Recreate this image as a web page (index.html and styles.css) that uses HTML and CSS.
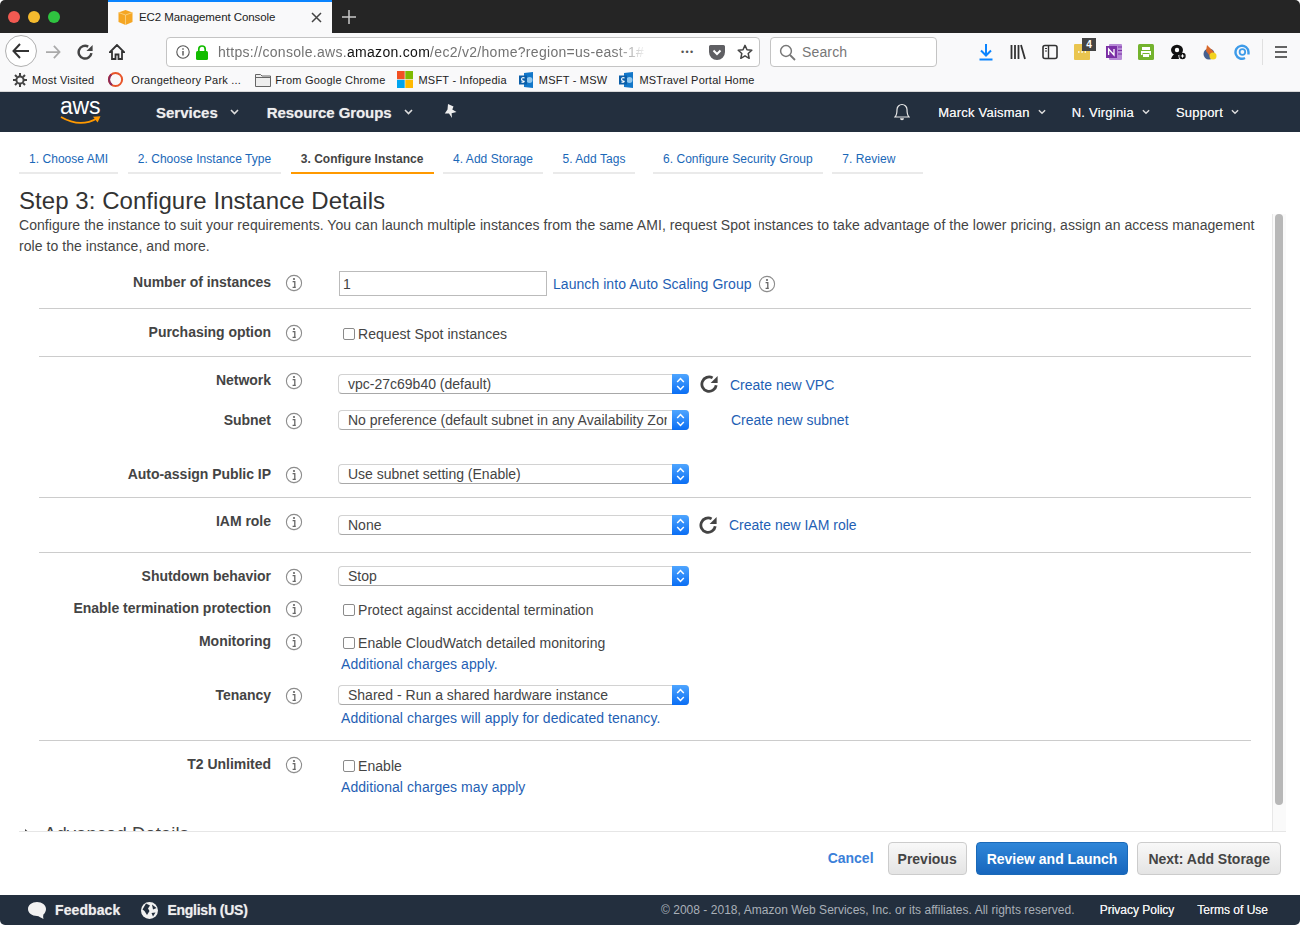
FILE: index.html
```html
<!DOCTYPE html>
<html lang="en">
  <head>
    <meta charset="UTF-8" />
    <meta name="viewport" content="width=device-width, initial-scale=1.0" />
    <title>EC2 Management Console</title>
    <link rel="stylesheet" href="styles.css">
  </head>
  <body>
    <!-- Shared icons -->
    <svg class="icon-defs" width="0" height="0">
      <symbol id="i-info" viewBox="0 0 18 18">
        <circle cx="9" cy="9.6" r="8" fill="#e4e4e4" />
        <circle cx="9" cy="9" r="7.6" fill="#fff" stroke="#8c8c8c" stroke-width="1.1" />
        <circle cx="9" cy="5" r="1.1" fill="#666" />
        <path d="M7.6 7.6H9.8V13M7.6 13.4H10.8" fill="none" stroke="#666" stroke-width="1.3" />
      </symbol>
      <symbol id="i-refresh" viewBox="0 0 18 18">
        <path d="M16.2 10.2A7.2 7.2 0 1 1 12.6 2.9" fill="none" stroke="#444" stroke-width="2.8" />
        <path d="M17.6 1V8H10.6Z" fill="#444" />
      </symbol>
      <symbol id="i-chev" viewBox="0 0 9 6">
        <path d="M1 1L4.5 4.5L8 1" fill="none" stroke="#ddd" stroke-width="1.6" />
      </symbol>
      <symbol id="i-step" viewBox="0 0 17 20">
        <path d="M5.2 8L8.5 4.6L11.8 8M5.2 12L8.5 15.4L11.8 12" fill="none" stroke="#fff" stroke-width="1.5" />
      </symbol>
      <symbol id="i-sp" viewBox="0 0 14 16">
        <path d="M5 1L14 0V16L5 15Z" fill="#1277c9" />
        <circle cx="10.5" cy="8" r="3" fill="#8fc6ee" />
        <rect x="0" y="3.5" width="8" height="9" fill="#0b5ea8" />
        <path d="M5.6 6Q3 5 2.6 6.8T5.2 9.4Q5 10.8 2.4 10" fill="none" stroke="#fff" stroke-width="1.1" />
      </symbol>
    </svg>

    <!-- Browser window -->
    <div class="tab-strip">
      <div class="lights">
        <span class="light light-red"></span>
        <span class="light light-yellow"></span>
        <span class="light light-green"></span>
      </div>
      <div class="browser-tab">
        <svg width="15" height="15" viewBox="0 0 15 15">
          <path d="M7.5 0L14.5 2.5V12L7.5 15L.5 12V2.5Z" fill="#f5a623" />
          <path d="M.5 2.5L7.5 5L14.5 2.5M7.5 5V15" fill="none" stroke="#fbd58c" stroke-width=".8" />
        </svg>
        <span class="browser-tab-title">EC2 Management Console</span>
        <svg class="browser-tab-close" width="11" height="11" viewBox="0 0 11 11">
          <path d="M1 1L10 10M10 1L1 10" stroke="#444" stroke-width="1.5" />
        </svg>
      </div>
      <svg class="new-tab" width="14" height="14" viewBox="0 0 14 14">
        <path d="M7 0V14M0 7H14" stroke="#c8c8c8" stroke-width="1.5" />
      </svg>
    </div>

    <div class="toolbar">
      <div class="back-btn">
        <svg width="18" height="16" viewBox="0 0 18 16">
          <path d="M8 1L1.5 8L8 15M1.5 8H17" fill="none" stroke="#333" stroke-width="2" />
        </svg>
      </div>
      <svg class="tool-forward" width="16" height="14" viewBox="0 0 18 16">
        <path d="M10 1L16.5 8L10 15M16.5 8H1" fill="none" stroke="#aaa" stroke-width="2" />
      </svg>
      <svg class="tool-reload" width="16" height="16" viewBox="0 0 18 18">
        <use href="#i-refresh" />
      </svg>
      <svg class="tool-home" width="16" height="16" viewBox="0 0 16 16">
        <path d="M8 1L1 8H3V15H6.5V10.5H9.5V15H13V8H15Z" fill="none" stroke="#333" stroke-width="1.8" />
      </svg>

      <div class="url-bar">
        <svg width="14" height="14" viewBox="0 0 14 14">
          <circle cx="7" cy="7" r="6.2" fill="none" stroke="#555" stroke-width="1.1" />
          <path d="M7 6V10.6M7 3.2V4.8" stroke="#555" stroke-width="1.4" />
        </svg>
        <svg class="url-lock" width="12" height="15" viewBox="0 0 12 15">
          <rect x="0" y="6" width="12" height="9" rx="1.5" fill="#12bc00" />
          <path d="M2.8 6.5V4.2A3.2 3.2 0 0 1 9.2 4.2V6.5" fill="none" stroke="#12bc00" stroke-width="1.7" />
        </svg>
        <div class="url-text">https://console.aws.<b>amazon.com</b>/ec2/v2/home?region=us-east-1#</div>
        <span class="url-dots">•••</span>
        <svg width="16" height="15" viewBox="0 0 16 15">
          <path d="M1.5 0H14.5A1.5 1.5 0 0 1 16 1.5V7A8 8 0 0 1 0 7V1.5A1.5 1.5 0 0 1 1.5 0Z" fill="#5f5f63" />
          <path d="M4.5 5.5L8 9L11.5 5.5" fill="none" stroke="#fff" stroke-width="2" />
        </svg>
        <svg class="url-star" width="16" height="16" viewBox="0 0 16 16">
          <path d="M8 1.4L10 5.8L14.8 6.3L11.2 9.5L12.2 14.3L8 11.8L3.8 14.3L4.8 9.5L1.2 6.3L6 5.8Z" fill="none" stroke="#444" stroke-width="1.5" stroke-linejoin="round" />
        </svg>
      </div>

      <div class="search-bar">
        <svg width="17" height="17" viewBox="0 0 17 17">
          <circle cx="7" cy="7" r="5.4" fill="none" stroke="#777" stroke-width="1.5" />
          <path d="M11 11L16 16" stroke="#777" stroke-width="1.8" />
        </svg>
        <span>Search</span>
      </div>

      <div class="tool-icons">
        <svg width="16" height="18" viewBox="0 0 16 18">
          <path d="M8 1V12M3 7.5L8 12.5L13 7.5" fill="none" stroke="#0a84ff" stroke-width="2" />
          <path d="M1.5 16.5H14.5" stroke="#0a84ff" stroke-width="2" />
        </svg>
        <svg width="16" height="16" viewBox="0 0 16 16">
          <path d="M1.5 1V15M5 1V15M8.5 1V15M11 1L15 15" stroke="#333" stroke-width="1.8" />
        </svg>
        <svg width="16" height="16" viewBox="0 0 16 16">
          <rect x="1" y="1.5" width="14" height="13" rx="2" fill="none" stroke="#333" stroke-width="1.6" />
          <path d="M6.5 2V14" stroke="#333" stroke-width="1.4" />
          <path d="M3 4.5H5M3 7H5" stroke="#333" />
        </svg>
        <div class="ext-notes">
          <svg width="16" height="16" viewBox="0 0 16 16">
            <rect width="16" height="16" rx="1" fill="#eac54f" />
            <path d="M4 8H5.500M7.300 8H8.800M10.600 8H12" stroke="#fff" stroke-width="1.6" />
          </svg>
          <span class="ext-badge">4</span>
        </div>
        <svg width="16" height="16" viewBox="0 0 16 16">
          <rect x="3" y="0" width="13" height="16" rx="1" fill="#b78ad6" />
          <path d="M12 3H16M12 6.500H16M12 10H16" stroke="#7b2fa5" />
          <rect x="0" y="2" width="11" height="12" fill="#7b2fa5" />
          <path d="M2.6 11V5L8 11V5" fill="none" stroke="#fff" stroke-width="1.3" />
        </svg>
        <svg width="16" height="16" viewBox="0 0 16 16">
          <rect width="16" height="16" rx="1.5" fill="#74b32d" />
          <rect x="4" y="3" width="8" height="3" fill="#fff" />
          <path d="M3 7H13V11H11.5V9H4.5V11H3Z" fill="#fff" />
          <rect x="5" y="10" width="6" height="3" fill="#fff" />
        </svg>
        <svg width="16" height="16" viewBox="0 0 16 16">
          <ellipse cx="7" cy="6" rx="6" ry="5.2" fill="#111" />
          <circle cx="7" cy="6" r="2.2" fill="#fff" />
          <path d="M1 15Q3 9 8 10L9 15Z" fill="#111" />
          <circle cx="12.5" cy="12" r="3.2" fill="#111" />
          <path d="M12.5 10.3V13.7M10.8 12H14.2" stroke="#fff" />
        </svg>
        <svg width="16" height="16" viewBox="0 0 16 16">
          <circle cx="7" cy="10" r="5.5" fill="#46608f" />
          <path d="M5 1L12 8L8 12L4 7Z" fill="#d9682a" />
          <circle cx="11" cy="12" r="3.5" fill="#f3d21f" />
        </svg>
        <svg width="16" height="16" viewBox="0 0 16 16">
          <path d="M11 14A6.500 6.500 0 1 1 14.500 8V10.500" fill="none" stroke="#3d9be9" stroke-width="2.4" />
          <circle cx="8.400" cy="8" r="2.800" fill="none" stroke="#3d9be9" stroke-width="1.800" />
        </svg>
      </div>
      <div class="tool-sep"></div>
      <svg class="tool-menu" width="12" height="12" viewBox="0 0 12 12">
        <path d="M0 1H12M0 6H12M0 11H12" stroke="#333" stroke-width="1.6" />
      </svg>
    </div>

    <div class="bookmarks">
      <div class="bookmark bookmark-first">
        <svg width="14" height="14" viewBox="0 0 14 14">
          <circle cx="7" cy="7" r="3.6" fill="none" stroke="#444" stroke-width="2" />
          <path d="M7 0V3M7 11V14M0 7H3M11 7H14M2 2L4 4M10 10L12 12M12 2L10 4M4 10L2 12" stroke="#444" stroke-width="2" />
        </svg>
        <span>Most Visited</span>
      </div>
      <div class="bookmark bookmark-otf">
        <svg width="17" height="17" viewBox="0 0 17 17">
          <circle cx="8.5" cy="8.5" r="6.6" fill="none" stroke="#e8552a" stroke-width="2" />
          <path d="M5 14A6.6 6.6 0 0 1 4.4 3.5" fill="none" stroke="#8c2b5a" stroke-width="2" />
        </svg>
        <span>Orangetheory Park ...</span>
      </div>
      <div class="bookmark bookmark-folder">
        <svg width="16" height="14" viewBox="0 0 16 14">
          <path d="M.5 1.5H5.5L7 3H15.5V13.5H.5Z" fill="#eee" stroke="#666" />
          <path d="M.5 4.5H15.5" stroke="#666" />
        </svg>
        <span>From Google Chrome</span>
      </div>
      <div class="bookmark bookmark-ms">
        <svg width="16" height="17" viewBox="0 0 16 17">
          <rect width="7.7" height="8.2" fill="#f25022" />
          <rect x="8.3" width="7.7" height="8.2" fill="#7fba00" />
          <rect y="8.8" width="7.7" height="8.2" fill="#00a4ef" />
          <rect x="8.3" y="8.8" width="7.7" height="8.2" fill="#ffb900" />
        </svg>
        <span>MSFT - Infopedia</span>
      </div>
      <div class="bookmark bookmark-sp">
        <svg width="14" height="16"><use href="#i-sp" /></svg>
        <span>MSFT - MSW</span>
      </div>
      <div class="bookmark bookmark-sp">
        <svg width="14" height="16"><use href="#i-sp" /></svg>
        <span>MSTravel Portal Home</span>
      </div>
    </div>

    <!-- Console header -->
    <nav class="navbar">
      <div class="aws-logo">
        <span class="aws-word">aws</span>
        <svg width="41" height="9" viewBox="0 0 41 9">
          <path d="M1 1Q20 12 37 2.5" fill="none" stroke="#f90" stroke-width="1.8" />
          <path d="M33 .8L40.5 .3L37.6 6.6Z" fill="#f90" />
        </svg>
      </div>
      <div class="nav-main nav-services">Services <svg width="9" height="6"><use href="#i-chev" /></svg></div>
      <div class="nav-main nav-groups">Resource Groups <svg width="9" height="6"><use href="#i-chev" /></svg></div>
      <svg class="nav-pin" width="13" height="14" viewBox="0 0 13 14">
        <path d="M4 0L9.5 2.5L8.3 5.5L12.5 8L7.6 9.2L8 14L5 9.5L.8 9.5L3.5 5.5Z" fill="#eee" />
      </svg>
      <svg class="nav-bell" width="16" height="18" viewBox="0 0 16 18">
        <path d="M8 1.5A5 5 0 0 0 3 6.5C3 11 2.6 12.4 1 14H15C13.4 12.4 13 11 13 6.5A5 5 0 0 0 8 1.5Z" fill="none" stroke="#e8e8e8" stroke-width="1.2" />
        <path d="M6 15.2A2 2 0 0 0 10 15.2Z" fill="#e8e8e8" />
      </svg>
      <div class="nav-right">Marck Vaisman <svg width="8" height="6"><use href="#i-chev" /></svg></div>
      <div class="nav-right">N. Virginia <svg width="8" height="6"><use href="#i-chev" /></svg></div>
      <div class="nav-right">Support <svg width="8" height="6"><use href="#i-chev" /></svg></div>
    </nav>

    <main class="wizard">
      <ul class="steps">
        <li class="step"><a href="#">1. Choose AMI</a></li>
        <li class="step"><a href="#">2. Choose Instance Type</a></li>
        <li class="step step-active"><a href="#">3. Configure Instance</a></li>
        <li class="step"><a href="#">4. Add Storage</a></li>
        <li class="step"><a href="#">5. Add Tags</a></li>
        <li class="step step-security"><a href="#">6. Configure Security Group</a></li>
        <li class="step step-review"><a href="#">7. Review</a></li>
      </ul>

      <h1 class="page-title">Step 3: Configure Instance Details</h1>

      <div class="panel">
        <div class="panel-body">
          <p class="intro">
            Configure the instance to suit your requirements. You can launch multiple instances from the same AMI, request Spot instances to take advantage of the lower pricing, assign an access management role to the instance, and more.
          </p>

          <!-- Number of instances -->
          <section class="form-section section-first">
            <div class="form-row">
              <label class="row-label">Number of instances</label>
              <svg class="info" width="18" height="18"><use href="#i-info" /></svg>
              <div class="row-field field-input">
                <input class="text-input" type="text" value="1" />
                <a class="link" href="#">Launch into Auto Scaling Group</a>
                <svg class="info info-inline" width="18" height="18"><use href="#i-info" /></svg>
              </div>
            </div>
          </section>

          <!-- Purchasing option -->
          <section class="form-section">
            <div class="form-row">
              <label class="row-label">Purchasing option</label>
              <svg class="info" width="18" height="18"><use href="#i-info" /></svg>
              <div class="row-field field-check">
                <label class="check"><input type="checkbox" />Request Spot instances</label>
              </div>
            </div>
          </section>

          <!-- Network -->
          <section class="form-section section-network">
            <div class="form-row row-subnet-gap">
              <label class="row-label">Network</label>
              <svg class="info" width="18" height="18"><use href="#i-info" /></svg>
              <div class="row-field field-low field-inline">
                <div class="select">
                  <span class="select-value">vpc-27c69b40 (default)</span>
                  <span class="select-arrows"><svg width="17" height="20"><use href="#i-step" /></svg></span>
                </div>
                <svg class="refresh" width="18" height="18"><use href="#i-refresh" /></svg>
                <a class="link link-create link-vpc" href="#">Create new VPC</a>
              </div>
            </div>
            <div class="form-row row-auto-gap">
              <label class="row-label">Subnet</label>
              <svg class="info" width="18" height="18"><use href="#i-info" /></svg>
              <div class="row-field field-inline">
                <div class="select">
                  <span class="select-value">No preference (default subnet in any Availability Zone)</span>
                  <span class="select-arrows"><svg width="17" height="20"><use href="#i-step" /></svg></span>
                </div>
                <a class="link link-create link-subnet" href="#">Create new subnet</a>
              </div>
            </div>
            <div class="form-row">
              <label class="row-label">Auto-assign Public IP</label>
              <svg class="info" width="18" height="18"><use href="#i-info" /></svg>
              <div class="row-field">
                <div class="select">
                  <span class="select-value">Use subnet setting (Enable)</span>
                  <span class="select-arrows"><svg width="17" height="20"><use href="#i-step" /></svg></span>
                </div>
              </div>
            </div>
          </section>

          <!-- IAM role -->
          <section class="form-section section-iam">
            <div class="form-row">
              <label class="row-label">IAM role</label>
              <svg class="info" width="18" height="18"><use href="#i-info" /></svg>
              <div class="row-field field-low field-inline">
                <div class="select">
                  <span class="select-value">None</span>
                  <span class="select-arrows"><svg width="17" height="20"><use href="#i-step" /></svg></span>
                </div>
                <svg class="refresh refresh-iam" width="18" height="18"><use href="#i-refresh" /></svg>
                <a class="link link-create link-iam" href="#">Create new IAM role</a>
              </div>
            </div>
          </section>

          <!-- Behaviour -->
          <section class="form-section section-behavior">
            <div class="form-row row-gap-12">
              <label class="row-label">Shutdown behavior</label>
              <svg class="info" width="18" height="18"><use href="#i-info" /></svg>
              <div class="row-field">
                <div class="select">
                  <span class="select-value">Stop</span>
                  <span class="select-arrows"><svg width="17" height="20"><use href="#i-step" /></svg></span>
                </div>
              </div>
            </div>
            <div class="form-row row-gap-11">
              <label class="row-label">Enable termination protection</label>
              <svg class="info" width="18" height="18"><use href="#i-info" /></svg>
              <div class="row-field field-check">
                <label class="check"><input type="checkbox" />Protect against accidental termination</label>
              </div>
            </div>
            <div class="form-row row-gap-11">
              <label class="row-label">Monitoring</label>
              <svg class="info" width="18" height="18"><use href="#i-info" /></svg>
              <div class="row-field field-check">
                <label class="check"><input type="checkbox" />Enable CloudWatch detailed monitoring</label>
                <a class="link link-note" href="#">Additional charges apply.</a>
              </div>
            </div>
            <div class="form-row">
              <label class="row-label">Tenancy</label>
              <svg class="info" width="18" height="18"><use href="#i-info" /></svg>
              <div class="row-field">
                <div class="select">
                  <span class="select-value">Shared - Run a shared hardware instance</span>
                  <span class="select-arrows"><svg width="17" height="20"><use href="#i-step" /></svg></span>
                </div>
                <a class="link link-note link-tenancy" href="#">Additional charges will apply for dedicated tenancy.</a>
              </div>
            </div>
          </section>

          <!-- T2 Unlimited -->
          <section class="form-section section-last">
            <div class="form-row">
              <label class="row-label">T2 Unlimited</label>
              <svg class="info" width="18" height="18"><use href="#i-info" /></svg>
              <div class="row-field field-check">
                <label class="check"><input type="checkbox" />Enable</label>
                <a class="link link-note" href="#">Additional charges may apply</a>
              </div>
            </div>
          </section>

          <div class="advanced">
            <span class="advanced-arrow"></span>
            <span>Advanced Details</span>
          </div>
        </div>
        <div class="scroll-track"><div class="scroll-thumb"></div></div>
      </div>

      <div class="actions">
        <a class="cancel" href="#">Cancel</a>
        <button class="btn btn-prev">Previous</button>
        <button class="btn btn-primary">Review and Launch</button>
        <button class="btn">Next: Add Storage</button>
      </div>
    </main>

    <footer class="site-footer">
      <svg class="foot-bubble" width="18" height="17" viewBox="0 0 18 17">
        <path d="M9 0C4 0 0 3 0 7C0 11 4 14 9 14C11 14 13 16 15.500 17C15 15.500 15 14 15.400 12.600C17 11.200 18 9.200 18 7C18 3 14 0 9 0Z" fill="#f2f2f2" />
      </svg>
      <span class="foot-main">Feedback</span>
      <svg class="foot-globe" width="17" height="17" viewBox="0 0 17 17">
        <circle cx="8.500" cy="8.500" r="8.500" fill="#f2f2f2" />
        <path d="M5 1.500L9 3.500L7 6.500L8.500 9L6 13L3.500 9L1.500 7.500ZM11 2.500L15.500 6L12 7.500ZM10.500 11L14.500 10.500L12 14.500Z" fill="#232f3e" />
      </svg>
      <span class="foot-main foot-lang">English (US)</span>
      <span class="foot-copy">© 2008 - 2018, Amazon Web Services, Inc. or its affiliates. All rights reserved.</span>
      <a class="foot-link foot-privacy" href="#">Privacy Policy</a>
      <a class="foot-link foot-terms" href="#">Terms of Use</a>
    </footer>
  </body>
</html>
```

FILE: styles.css
```css
/* Reset some basic styles */
* {
  margin: 0;
  padding: 0;
  box-sizing: border-box;
}

body {
  font-family: "Liberation Sans", Arial, sans-serif;
  font-size: 14px;
  letter-spacing: 0.055px;
  color: #444;
  background: #fff;
  width: 1300px;
  height: 925px;
  overflow: hidden;
  display: flex;
  flex-direction: column;
}

a {
  text-decoration: none;
}

svg {
  display: block;
  flex-shrink: 0;
}

.icon-defs {
  position: absolute;
}

/* Browser tab strip */
.tab-strip {
  height: 33px;
  flex-shrink: 0;
  background: #252525;
  display: flex;
  align-items: center;
  border-radius: 5px 5px 0 0;
}

.lights {
  width: 108px;
  display: flex;
  gap: 8px;
  padding-left: 8px;
}

.light {
  width: 12px;
  height: 12px;
  border-radius: 50%;
}

.light-red {
  background: #f25a52;
}

.light-yellow {
  background: #f6bb2e;
}

.light-green {
  background: #2fc440;
}

.browser-tab {
  width: 224px;
  height: 33px;
  background: #f9f9fa;
  border-top: 2px solid #0a84ff;
  display: flex;
  align-items: center;
  padding: 0 0 1px 10px;
  color: #222;
  font-size: 11.5px;
  letter-spacing: -0.08px;
}

.browser-tab-title {
  margin-left: 6px;
}

.browser-tab-close {
  margin-left: auto;
  margin-right: 10px;
}

.new-tab {
  margin-left: 10px;
}

/* Browser toolbar */
.toolbar {
  height: 38px;
  flex-shrink: 0;
  background: #f9f9fa;
  display: flex;
  align-items: center;
}

.back-btn {
  width: 32px;
  height: 32px;
  margin: -2px 0 0 5px;
  border: 1px solid #b0b0b0;
  border-radius: 50%;
  background: #fff;
  display: flex;
  align-items: center;
  justify-content: center;
}

.tool-forward {
  margin-left: 8px;
}

.tool-reload {
  margin-left: 16px;
}

.tool-home {
  margin-left: 16px;
}

.url-bar {
  width: 594px;
  height: 30px;
  margin-left: 41px;
  background: #fff;
  border: 1px solid #c4c4c4;
  border-radius: 4px;
  display: flex;
  align-items: center;
  padding: 0 6px 0 9px;
}

.url-lock {
  margin-left: 6px;
}

.url-text {
  width: 430px;
  margin-left: 10px;
  overflow: hidden;
  white-space: nowrap;
  color: #737373;
  letter-spacing: 0.3px;
  -webkit-mask-image: linear-gradient(to right, #000 92%, transparent 100%);
  mask-image: linear-gradient(to right, #000 92%, transparent 100%);
}

.url-text b {
  font-weight: 400;
  color: #111;
}

.url-dots {
  width: 16px;
  margin-left: 33px;
  margin-right: 12px;
  font-size: 9px;
  letter-spacing: 1.4px;
  color: #555;
  white-space: nowrap;
}

.url-star {
  margin-left: 12px;
}

.search-bar {
  width: 167px;
  height: 30px;
  margin-left: 10px;
  background: #fff;
  border: 1px solid #c4c4c4;
  border-radius: 4px;
  display: flex;
  align-items: center;
  gap: 6px;
  padding-left: 8px;
  color: #777;
  letter-spacing: 0.15px;
}

.tool-icons {
  display: flex;
  align-items: center;
  gap: 16px;
  margin-left: 41px;
}

.ext-notes {
  position: relative;
}

.ext-badge {
  position: absolute;
  top: -6px;
  left: 8px;
  width: 14px;
  height: 13px;
  background: #444;
  color: #fff;
  font-size: 10px;
  font-weight: bold;
  line-height: 13px;
  text-align: center;
}

.tool-sep {
  width: 1px;
  height: 26px;
  margin-left: 12px;
  background: #e0e0e0;
}

.tool-menu {
  margin-left: 12px;
}

/* Bookmarks */
.bookmarks {
  height: 21px;
  flex-shrink: 0;
  padding-bottom: 3px;
  background: #f9f9fa;
  border-bottom: 1px solid #d8d8d8;
  display: flex;
  align-items: center;
  font-size: 11px;
  color: #222;
  letter-spacing: 0.22px;
}

.bookmark {
  display: flex;
  align-items: center;
  gap: 6px;
}

.bookmark-first {
  margin-left: 13px;
  gap: 5px;
}

.bookmark-otf {
  margin-left: 13px;
  gap: 7px;
}

.bookmark-folder {
  margin-left: 14px;
  gap: 4px;
}

.bookmark-ms {
  margin-left: 12px;
  gap: 5px;
}

.bookmark-sp {
  margin-left: 12px;
}

/* Console header */
.navbar {
  height: 40px;
  flex-shrink: 0;
  background: #232f3e;
  display: flex;
  align-items: center;
  color: #eee;
  letter-spacing: 0;
}

.aws-logo {
  width: 41px;
  margin-left: 60px;
  margin-top: -2px;
}

.aws-word {
  display: block;
  font-size: 23px;
  line-height: 18px;
  color: #fff;
  letter-spacing: -0.2px;
}

.aws-logo svg {
  margin-top: 1px;
}

.nav-main {
  display: flex;
  align-items: center;
  gap: 12px;
  font-size: 15px;
  font-weight: bold;
  text-shadow: 0 0 1px rgba(255, 255, 255, 0.5);
}

.nav-services {
  margin-left: 55px;
}

.nav-groups {
  margin-left: 28px;
  letter-spacing: -0.07px;
}

.nav-pin {
  margin-left: 31px;
  margin-top: -2px;
}

.nav-bell {
  margin-left: auto;
  margin-right: 2px;
}

.nav-right {
  display: flex;
  align-items: center;
  gap: 8px;
  font-size: 13px;
  letter-spacing: 0.22px;
  text-shadow: 0 0 0.5px #eee;
  margin-left: 26px;
}

.nav-right:last-child {
  margin-right: 61px;
}

/* Wizard */
.wizard {
  flex: 1;
  min-height: 0;
  display: flex;
  flex-direction: column;
}

.steps {
  list-style: none;
  display: flex;
  gap: 9.5px;
  padding: 19px 0 0 19px;
}

.step {
  font-size: 12px;
  letter-spacing: 0.04px;
  line-height: 16px;
  padding: 0 10px 5px;
  border-bottom: 2px solid #eaeaea;
}

.step a {
  color: #1a68b8;
}

.step-active {
  border-bottom-color: #f90;
}

.step-active a {
  color: #444;
  font-weight: bold;
}

.step-security {
  margin-left: 8px;
}

.step-review {
  padding-right: 28px;
}

.page-title {
  font-size: 24px;
  font-weight: 400;
  line-height: 26px;
  margin: 14px 0 0 19px;
  color: #333;
}

.panel {
  flex: 1;
  min-height: 0;
  margin: 0 14px 0 19px;
  border-bottom: 1px solid #e6e6e6;
  display: flex;
}

.panel-body {
  flex: 1;
  min-width: 0;
  overflow: hidden;
}

.intro {
  padding-top: 1px;
  line-height: 21px;
}

.scroll-track {
  width: 14px;
  background: #fafafa;
  border-left: 1px solid #e8e8e8;
  padding: 0 3px 0 2px;
}

.scroll-thumb {
  width: 8px;
  height: 591px;
  background: #b8b8b8;
  border-radius: 4px;
}

/* Form rows */
.form-section {
  margin: 0 21px 0 20px;
  padding: 13px 0 12px;
  border-bottom: 1px solid #ccc;
}

.section-first {
  padding-top: 15px;
}

.section-network {
  padding-bottom: 13px;
}

.section-iam {
  padding-bottom: 17px;
}

.section-last {
  border-bottom: none;
}

.form-row {
  display: grid;
  grid-template-columns: 232px 68px 1fr;
  align-items: start;
}

.row-subnet-gap {
  margin-bottom: 16px;
}

.row-auto-gap {
  margin-bottom: 34px;
}

.row-gap-12 {
  margin-bottom: 12px;
}

.row-gap-11 {
  margin-bottom: 11px;
}

.row-label {
  font-weight: bold;
  line-height: 20px;
  letter-spacing: -0.03px;
  text-align: right;
  color: #444;
}

.info {
  margin: 2px 0 0 14px;
}

.info-inline {
  margin: 1px 0 0 6px;
}

.field-input {
  display: flex;
  align-items: center;
  margin-top: -1px;
}

.field-check {
  padding-top: 2px;
}

.field-low {
  padding-top: 4px;
}

.field-inline {
  display: flex;
  align-items: center;
}

.text-input {
  width: 208px;
  height: 25px;
  border: 1px solid #bbb;
  padding-left: 3px;
  font: inherit;
  color: #444;
  margin-right: 6px;
}

.check {
  display: flex;
  align-items: center;
  line-height: 20px;
}

.check input {
  appearance: none;
  -webkit-appearance: none;
  width: 12px;
  height: 12px;
  margin: 0 3px 0 4px;
  border: 1px solid #8a8a8a;
  border-radius: 2px;
  background: #fff;
}

.link {
  color: #1f5fb4;
}

.link-create {
  letter-spacing: 0;
}

.link-note {
  display: block;
  padding-top: 1px;
  line-height: 20px;
  margin-left: 2px;
}

.link-tenancy {
  margin-top: 2px;
}

.select {
  width: 351px;
  height: 20px;
  margin-left: -1px;
  display: flex;
  background: #fff;
  border: 1px solid #d2d2d2;
  border-bottom-color: #a8a8a8;
  border-right: none;
  border-radius: 4px;
  line-height: 19px;
  letter-spacing: 0;
}

.select-value {
  flex: 1;
  min-width: 0;
  overflow: hidden;
  white-space: nowrap;
  margin-right: 5px;
  padding-left: 9px;
}

.select-arrows {
  width: 17px;
  height: 20px;
  margin: -1px 0 -1px 0;
  background: linear-gradient(#4ea5ff, #0a6ef4);
  border-radius: 0 4px 4px 0;
}

.refresh {
  margin-left: 11px;
  margin-top: -1px;
}

.refresh-iam {
  margin-left: 10px;
}

.link-vpc,
.link-iam {
  margin-left: 12px;
}

.link-vpc {
  padding-top: 1px;
}

.link-subnet {
  margin-left: 42px;
}

.advanced {
  display: flex;
  align-items: center;
  margin: 14px 0 0 6px;
  font-size: 18.5px;
  line-height: 22px;
  color: #444;
}

.advanced-arrow {
  width: 0;
  height: 0;
  margin-right: 13px;
  border-left: 6px solid #444;
  border-top: 5px solid transparent;
  border-bottom: 5px solid transparent;
}

/* Bottom buttons */
.actions {
  height: 63px;
  flex-shrink: 0;
  display: flex;
  align-items: flex-start;
  justify-content: flex-end;
  gap: 9px;
  padding: 10px 19px 0 0;
  letter-spacing: 0;
}

.cancel {
  line-height: 33px;
  margin-right: 5px;
  color: #3b7fd9;
  font-weight: bold;
}

.btn {
  height: 33px;
  padding: 0 10px;
  font: bold 14px "Liberation Sans", Arial, sans-serif;
  color: #444;
  border: 1px solid #ccc;
  border-radius: 4px;
  background: linear-gradient(#f8f8f8, #e4e4e4);
}

.btn-prev {
  padding: 0 9px;
}

.btn-primary {
  color: #fff;
  border-color: #1a69b8;
  background: linear-gradient(#2f86d8, #1766bd);
}

/* Console footer */
.site-footer {
  height: 30px;
  flex-shrink: 0;
  background: #232f3e;
  border-radius: 0 0 5px 5px;
  display: flex;
  align-items: center;
  color: #eee;
  letter-spacing: 0;
}

.foot-bubble {
  margin-left: 28px;
}

.foot-main {
  margin-left: 9px;
  font-weight: bold;
  letter-spacing: 0.1px;
  text-shadow: 0 0 1px rgba(255, 255, 255, 0.5);
}

.foot-lang {
  letter-spacing: -0.25px;
}

.foot-globe {
  margin-left: 21px;
}

.foot-copy {
  margin-left: auto;
  font-size: 12px;
  letter-spacing: 0.03px;
  color: #a9b0b8;
}

.foot-link {
  font-size: 12px;
  color: #eee;
  text-shadow: 0 0 0.5px #eee;
}

.foot-privacy {
  margin-left: 25px;
}

.foot-terms {
  margin: 0 32px 0 23px;
}
```
